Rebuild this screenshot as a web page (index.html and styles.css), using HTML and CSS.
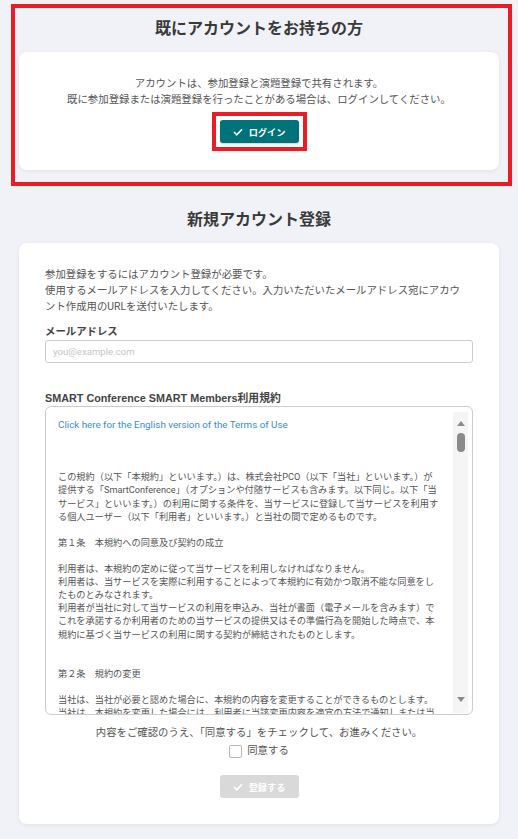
FILE: index.html
```html
<!DOCTYPE html>
<html lang="ja">

<head>
    <meta charset="UTF-8" />
    <meta name="viewport" content="width=device-width, initial-scale=1.0" />
    <title>ログイン・新規アカウント登録</title>
    <link rel="stylesheet" href="styles.css">
</head>

<body>
    <div class="page">
        <section class="login-area">
            <h2 class="section-title">既にアカウントをお持ちの方</h2>
            <div class="card login-card">
                <p class="lead">アカウントは、参加登録と演題登録で共有されます。<br>既に参加登録または演題登録を行ったことがある場合は、ログインしてください。</p>
                <div class="login-action">
                    <span class="highlight">
                        <button class="btn btn-primary" type="button">
                            <svg class="check" width="10" height="8" viewBox="0 0 10 8"><polyline points="1,4 3.8,6.8 9,1.2" /></svg>
                            ログイン
                        </button>
                    </span>
                </div>
            </div>
        </section>

        <section class="signup-area">
            <h2 class="section-title">新規アカウント登録</h2>
            <div class="card signup-card">
                <p class="intro">参加登録をするにはアカウント登録が必要です。<br>使用するメールアドレスを入力してください。入力いただいたメールアドレス宛にアカウ<br>ント作成用のURLを送付いたします。</p>

                <label class="field-label" for="email">メールアドレス</label>
                <input class="text-input" type="text" id="email" placeholder="you@example.com" />

                <div class="field-label terms-label">SMART Conference SMART Members利用規約</div>
                <div class="terms-box">
                    <div class="terms-body">
                        <a class="terms-link" href="#">Click here for the English version of the Terms of Use</a>

                        <p class="terms-p gap-3">この規約（以下「本規約」といいます。）は、株式会社PCO（以下「当社」といいます。）が<br>提供する「SmartConference」（オプションや付随サービスも含みます。以下同じ。以下「当<br>サービス」といいます。）の利用に関する条件を、当サービスに登録して当サービスを利用す<br>る個人ユーザー（以下「利用者」といいます。）と当社の間で定めるものです。</p>

                        <p class="terms-p gap-1">第１条　本規約への同意及び契約の成立</p>

                        <p class="terms-p gap-1">利用者は、本規約の定めに従って当サービスを利用しなければなりません。<br>利用者は、当サービスを実際に利用することによって本規約に有効かつ取消不能な同意をし<br>たものとみなされます。<br>利用者が当社に対して当サービスの利用を申込み、当社が書面（電子メールを含みます）で<br>これを承諾するか利用者のための当サービスの提供又はその準備行為を開始した時点で、本<br>規約に基づく当サービスの利用に関する契約が締結されたものとします。</p>

                        <p class="terms-p gap-2">第２条　規約の変更</p>

                        <p class="terms-p gap-1">当社は、当社が必要と認めた場合に、本規約の内容を変更することができるものとします。<br>当社は、本規約を変更した場合には、利用者に当該変更内容を適宜の方法で通知しまたは当<br>サービス上に掲示するものとします。</p>

                        <p class="terms-p gap-2">第３条　アカウントの管理</p>

                        <p class="terms-p gap-1">利用者は、自己の責任においてアカウント情報を管理するものとします。</p>
                    </div>
                    <div class="scrollbar">
                        <span class="arrow arrow-up"></span>
                        <span class="thumb"></span>
                        <span class="track-fill"></span>
                        <span class="arrow arrow-down"></span>
                    </div>
                </div>

                <p class="agree-note">内容をご確認のうえ、「同意する」をチェックして、お進みください。</p>
                <label class="agree-check">
                    <span class="checkbox"></span>
                    同意する
                </label>

                <button class="btn btn-disabled" type="button" disabled>
                    <svg class="check" width="10" height="8" viewBox="0 0 10 8"><polyline points="1,4 3.8,6.8 9,1.2" /></svg>
                    登録する
                </button>
            </div>
        </section>
    </div>
</body>

</html>
```

FILE: styles.css
```css
body {
    font-family: Roboto, "Noto Sans CJK JP", sans-serif;
    background-color: #f1f2f7;
    color: #555;
    margin: 0;
}

.page {
    padding: 4px 0 10px;
}

p {
    margin: 0;
}

.section-title {
    margin: 0;
    font-size: 16px;
    line-height: 24px;
    font-weight: bold;
    text-align: center;
    color: #3a3a3a;
}

.card {
    background: #ffffff;
    border-radius: 8px;
    box-shadow: 0 1px 4px rgba(0, 0, 0, 0.07);
}

/* Login */
.login-area {
    margin: 0 6px 0 11px;
    padding: 9px 9px 12px 4px;
    border: 4px solid #ed1c24;
}

.login-card {
    margin-top: 11px;
    padding: 24px 0 19px;
    text-align: center;
}

.lead {
    font-size: 10.4px;
    line-height: 16px;
}

.login-action {
    display: flex;
    justify-content: center;
    margin-top: 4px;
}

.highlight {
    display: flex;
    padding: 4px;
    border: 4px solid #ed1c24;
    background: #ffffff;
}

/* Buttons */
.btn {
    display: inline-flex;
    align-items: center;
    justify-content: center;
    gap: 6px;
    width: 79px;
    height: 23px;
    padding: 0;
    border: none;
    border-radius: 3px;
    font-family: inherit;
    font-size: 9.2px;
    font-weight: bold;
    color: #ffffff;
}

.btn .check {
    fill: none;
    stroke: #ffffff;
    stroke-width: 1.5;
}

.btn-primary {
    background-color: #00727a;
    box-shadow: 0 1px 2px rgba(0, 0, 0, 0.2);
}

.btn-disabled {
    display: flex;
    margin: 16px auto 0;
    background-color: #d9d9d9;
}

/* Sign up */
.signup-area {
    margin: 0 19px;
    padding-top: 22px;
}

.signup-card {
    margin-top: 11px;
    padding: 24px 26px 26px;
}

.intro {
    font-size: 10.4px;
    line-height: 16px;
}

.field-label {
    display: block;
    margin-top: 9px;
    font-size: 10.4px;
    line-height: 16px;
    font-weight: bold;
    color: #444;
}

.text-input {
    display: block;
    box-sizing: border-box;
    width: 100%;
    height: 23px;
    padding: 0 7px;
    border: 1px solid #cccccc;
    border-radius: 3px;
    font-family: inherit;
    font-size: 9.6px;
}

.text-input::placeholder {
    color: #c5c5c5;
}

.terms-label {
    margin-top: 27px;
    font-family: "Liberation Sans", "Noto Sans CJK JP", sans-serif;
    font-size: 10.8px;
}

/* Terms */
.terms-box {
    display: flex;
    box-sizing: border-box;
    height: 309px;
    border: 1px solid #cccccc;
    border-radius: 6px;
    overflow: hidden;
}

.terms-body {
    flex: 1;
    padding: 11px 0 0 12px;
    overflow-y: auto;
    scrollbar-width: none;
    white-space: nowrap;
    font-size: 9.2px;
    line-height: 13.1px;
}

.terms-link {
    display: block;
    font-size: 9.8px;
    color: #3d8bd4;
    text-decoration: none;
}

.gap-1 {
    margin-top: 13.1px;
}

.gap-2 {
    margin-top: 26.2px;
}

.gap-3 {
    margin-top: 39.3px;
}

.scrollbar {
    display: flex;
    flex-direction: column;
    align-items: center;
    width: 15px;
    margin: 5px 4px 1px 0;
    background-color: #f5f5f5;
}

.arrow {
    width: 0;
    height: 0;
    border-left: 4px solid transparent;
    border-right: 4px solid transparent;
}

.arrow-up {
    margin-top: 9px;
    border-bottom: 5px solid #8a8a8a;
}

.arrow-down {
    margin-bottom: 11px;
    border-top: 5px solid #8a8a8a;
}

.thumb {
    width: 8px;
    height: 19px;
    margin-top: 7px;
    border-radius: 4px;
    background-color: #8a8a8a;
}

.track-fill {
    flex: 1;
}

/* Agreement */
.agree-note {
    margin-top: 10px;
    font-size: 10.4px;
    line-height: 16px;
    text-align: center;
}

.agree-check {
    display: flex;
    align-items: center;
    justify-content: center;
    gap: 5px;
    margin-top: 2px;
    font-size: 10.4px;
    line-height: 16px;
}

.checkbox {
    box-sizing: border-box;
    width: 13px;
    height: 13px;
    border: 1px solid #b8b8b8;
    border-radius: 2px;
    background: #ffffff;
}
```
